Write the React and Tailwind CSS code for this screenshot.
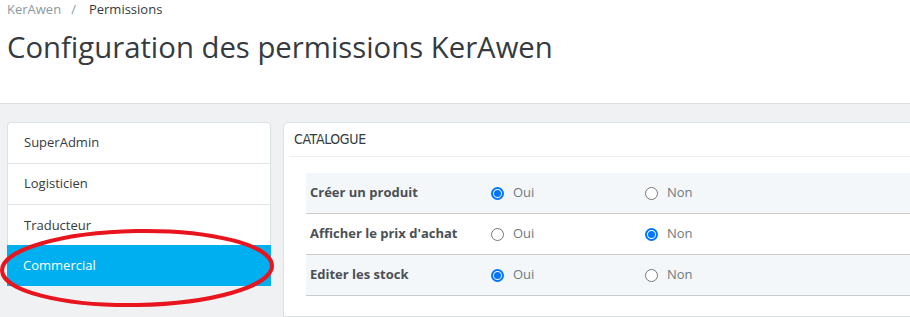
import React from 'react'

const ROLES = ['SuperAdmin', 'Logisticien', 'Traducteur', 'Commercial']
const ROWS = [
  { label: 'Créer un produit', value: 'oui' },
  { label: "Afficher le prix d'achat", value: 'non' },
  { label: 'Editer les stock', value: 'oui' },
]

function Radio({ checked, label }) {
  return (
    <div className="flex items-center gap-[9px]">
      {checked ? (
        <span className="w-[13px] h-[13px] rounded-full border-2 border-[#0075ff] flex items-center justify-center">
          <span className="w-[7px] h-[7px] rounded-full bg-[#0075ff]" />
        </span>
      ) : (
        <span className="w-[13px] h-[13px] rounded-full border border-[#767676] bg-white" />
      )}
      <span className="text-[13px] text-[#6c7a80]">{label}</span>
    </div>
  )
}

export default function App() {
  return (
    <div className="relative w-[910px] h-[317px] overflow-hidden bg-white text-[#363a41]" style={{ fontFamily: '"Open Sans", sans-serif' }}>
      <div className="h-[103px] px-[7px]">
        <div className="flex items-center gap-[10px] text-[13px] h-[19px]">
          <span className="text-[#8a999f]">KerAwen</span>
          <span className="text-[#8a999f]">/</span>
          <span className="ml-[3px]">Permissions</span>
        </div>
        <h1 className="text-[29.3px] leading-[37px] mt-[10px]">Configuration des permissions KerAwen</h1>
      </div>

      <div className="border-t border-[#dcdfe0] bg-[#eff1f2] h-[214px] flex gap-[12px] pl-[7px] pt-[18px]">
        <div className="w-[264px] shrink-0 self-start bg-white border border-[#dbe2e4] rounded-t-[4px]">
          {ROLES.map((r, i) => (
            <div
              key={r}
              className={
                r === 'Commercial'
                  ? 'h-[41px] flex items-center pl-[16px] text-[13px] bg-[#00aff0] text-white -mx-px -mb-px -mt-px'
                  : `h-[41px] flex items-center pl-[16px] text-[13px] ${i < 2 ? 'border-b border-[#dfe3e4]' : ''}`
              }
            >
              {r}
            </div>
          ))}
        </div>

        <div className="w-[700px] shrink-0 bg-white border border-[#dbe2e4] rounded-tl-[5px] px-[5px]">
          <div className="h-[34px] flex items-center pl-[5px] border-b border-[#eeeeee]">
            <span className="text-[14px] tracking-tight" style={{ fontFamily: '"DejaVu Sans Condensed", "Liberation Sans Narrow", sans-serif', fontStretch: 'condensed' }}>CATALOGUE</span>
          </div>
          <div className="mt-[16px] ml-[17px]">
            {ROWS.map((row, i) => (
              <div key={row.label} className={`h-[41px] flex items-center border-b border-[#cccccc] ${i % 2 === 0 ? 'bg-[#f4f7fa]' : 'bg-white'}`}>
                <span className="w-[185px] pl-[4px] text-[13px] font-bold text-[#4a5055]">{row.label}</span>
                <div className="w-[154px]">
                  <Radio checked={row.value === 'oui'} label="Oui" />
                </div>
                <Radio checked={row.value === 'non'} label="Non" />
              </div>
            ))}
          </div>
        </div>
      </div>

      <svg className="absolute inset-0 pointer-events-none" width="910" height="317">
        <ellipse cx="137" cy="268" rx="135" ry="37" fill="none" stroke="#e8151e" strokeWidth="4" transform="rotate(-1 137 268)" />
      </svg>
    </div>
  )
}
